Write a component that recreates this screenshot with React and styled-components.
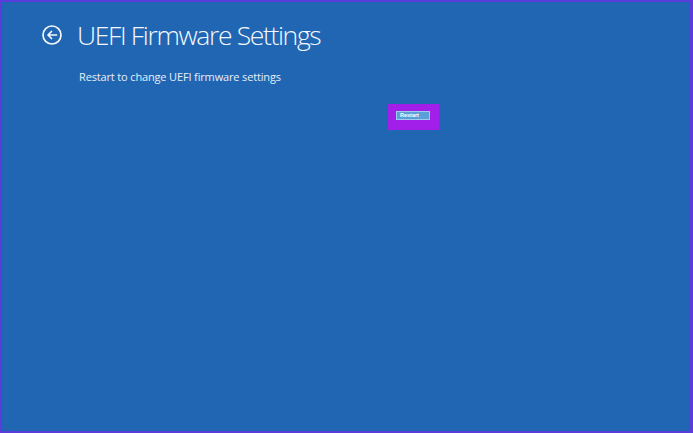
import React from "react";
import styled, { createGlobalStyle } from "styled-components";

const GlobalStyle = createGlobalStyle`
  html, body {
    margin: 0;
    padding: 0;
    background: #2166b3;
  }
  * {
    box-sizing: border-box;
  }
`;

const Screen = styled.div`
  width: 693px;
  height: 433px;
  border: 2px solid #5a3cdc;
  border-right-width: 3px;
  background: #2166b3;
  color: #ffffff;
  font-family: "Segoe UI", "Open Sans", "Liberation Sans", sans-serif;
  display: flex;
  flex-direction: column;
  padding: 15px 0 0 39px;
`;

const Header = styled.div`
  display: flex;
  align-items: center;
  gap: 14px;
`;

const BackButton = styled.button`
  width: 22px;
  height: 22px;
  padding: 0;
  border: none;
  background: none;
  display: flex;
  align-items: center;
  justify-content: center;
  cursor: pointer;
`;

const Title = styled.h1`
  margin: 0;
  font-size: 26.5px;
  font-weight: 300;
  letter-spacing: -1.35px;
  line-height: 36px;
  color: #f4f8fc;
`;

const Subtitle = styled.p`
  margin: 16px 0 0 38px;
  font-size: 11px;
  font-weight: 400;
  letter-spacing: -0.15px;
  color: #e6eef8;
`;

const ActionRow = styled.div`
  display: flex;
  margin: 20px 0 0 347px;
`;

const Highlight = styled.div`
  background: #a21ee9;
  padding: 7px 9px 10px 8px;
  display: flex;
`;

const RestartButton = styled.button`
  width: 34px;
  height: 9px;
  padding: 0 0 0 3px;
  border: 1px solid #9ccbec;
  background: #5b9fd9;
  color: #ffffff;
  font-family: "Liberation Sans", sans-serif;
  font-size: 5.5px;
  font-weight: 700;
  line-height: 7px;
  text-align: left;
  cursor: pointer;
`;

const BackIcon = () => (
  <svg width="22" height="22" viewBox="0 0 22 22" fill="none" stroke="#f4f8fc">
    <circle cx="11" cy="11" r="9" strokeWidth="1.7" />
    <path d="M15.5 11H7 M10.5 7.5L7 11l3.5 3.5" strokeWidth="1.7" strokeLinecap="round" strokeLinejoin="round" />
  </svg>
);

export default function App() {
  return (
    <>
      <GlobalStyle />
      <Screen>
        <Header>
          <BackButton aria-label="Back">
            <BackIcon />
          </BackButton>
          <Title>UEFI Firmware Settings</Title>
        </Header>
        <Subtitle>Restart to change UEFI firmware settings</Subtitle>
        <ActionRow>
          <Highlight>
            <RestartButton>Restart</RestartButton>
          </Highlight>
        </ActionRow>
      </Screen>
    </>
  );
}
